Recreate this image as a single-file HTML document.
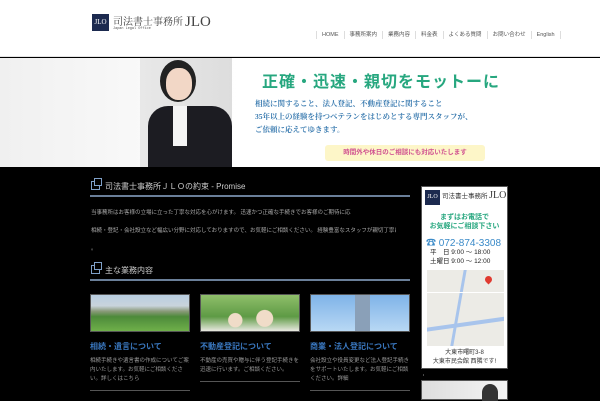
<!DOCTYPE html>
<html><head><meta charset="utf-8"><style>
*{margin:0;padding:0;box-sizing:border-box}
body{width:600px;height:400px;overflow:hidden;background:#000;font-family:"Liberation Sans","Noto Sans CJK JP",sans-serif;position:relative}
.hdr{position:absolute;left:0;top:0;width:600px;height:57px;background:#fff;border-bottom:1px solid #e4e4e4}
.logo{position:absolute;left:92px;top:14px;width:17px;height:17px;background:#1c2a4f;color:#fff;font:7px "Liberation Serif",serif;text-align:center;line-height:17px}
.lt{position:absolute;left:113px;top:13px;font:10px "Liberation Serif","Noto Serif CJK SC",serif;color:#444;white-space:nowrap}
.lt b{font-weight:normal;font-size:15px;margin-left:2px;vertical-align:-1px}
.ls{position:absolute;left:113px;top:27px;font:3.5px "Liberation Mono",monospace;color:#555}
.nav{position:absolute;left:316px;top:31px;font-size:5.5px;color:#555;display:flex}
.nav span{padding:0 5px;border-left:1px solid #ddd;line-height:8px}
.hero{position:absolute;left:0;top:58px;width:600px;height:109px;background:linear-gradient(90deg,#f0f0f0,#fff 40%,#fff)}
.woman{position:absolute;left:140px;top:58px;width:92px;height:109px;background:linear-gradient(90deg,#e8e8e8,#ddd)}
.h1{position:absolute;left:262px;top:68px;font-size:16px;font-weight:bold;color:#27a77f;letter-spacing:1px;white-space:nowrap}
.ht{position:absolute;left:255px;top:97px;font:7.5px/13px "Liberation Serif","Noto Serif CJK SC",serif;color:#3a7bb0;font-weight:bold;white-space:nowrap}
.pill{position:absolute;left:325px;top:145px;width:160px;height:16px;background:#fdf6c8;color:#d05090;font-size:6.5px;line-height:16px;text-align:center;border-radius:3px;font-weight:bold}
.sec{position:absolute;left:91px;color:#ccc;font-size:8px}
.rule{position:absolute;left:90px;width:320px;height:2px;background:#6a7f99}
.ic{display:inline-block;width:9px;height:9px;border:1px solid #7fa0c8;position:relative;vertical-align:-1px;margin-right:5px}
.ic:after{content:"";position:absolute;left:2px;top:-4px;width:6px;height:6px;border:1px solid #7fa0c8;background:#000}
.p{position:absolute;left:91px;font-size:5.5px;color:#aaa;white-space:nowrap;overflow:hidden}
.card{position:absolute;top:294px;width:100px}
.img{height:38px;border:1px solid #555}
.ct{margin-top:9px;font-size:8px;color:#3a78c0;font-weight:bold}
.cp{margin-top:5px;font-size:5.5px;line-height:9px;color:#999}
.cl{height:1px;background:#555;position:absolute;left:0;width:100px}
.side{position:absolute;left:421px;top:186px;width:87px;height:183px;background:#fff;border:1px solid #555}
</style></head><body>
<div class="hdr">
<div class="logo">JLO</div>
<div class="lt">司法書士事務所<b>JLO</b></div>
<div class="ls">Japan Legal Office</div>
<div class="nav"><span>HOME</span><span>事務所案内</span><span>業務内容</span><span>料金表</span><span>よくある質問</span><span>お問い合わせ</span><span style="border-right:1px solid #ddd">English</span></div>
</div>
<div class="hero"></div>
<div class="woman">
<div style="position:absolute;left:20px;top:2px;width:36px;height:42px;border-radius:50%;background:#222"></div>
<div style="position:absolute;left:26px;top:10px;width:26px;height:32px;border-radius:45%;background:#f2d7c6"></div>
<div style="position:absolute;left:8px;top:48px;width:84px;height:61px;border-radius:20px 20px 0 0;background:#1c1c22"></div>
<div style="position:absolute;left:33px;top:48px;width:14px;height:40px;background:#f4f4f4"></div>
</div>
<div class="h1">正確・迅速・親切をモットーに</div>
<div class="ht">相続に関すること、法人登記、不動産登記に関すること<br>35年以上の経験を持つベテランをはじめとする専門スタッフが、<br>ご依頼に応えてゆきます。</div>
<div class="pill">時間外や休日のご相談にも対応いたします</div>

<div class="sec" style="top:181px"><span class="ic"></span>司法書士事務所ＪＬＯの約束 - Promise</div>
<div class="rule" style="top:195px"></div>
<div class="p" style="top:208px;width:260px">当事務所はお客様の立場に立った丁寧な対応を心がけます。 迅速かつ正確な手続きでお客様のご期待に応えます。</div>
<div class="p" style="top:226px;width:305px">相続・登記・会社設立など幅広い分野に対応しておりますので、お気軽にご相談ください。 経験豊富なスタッフが親切丁寧にサポートいたします。ご相談お待ちしております。</div>
<div class="p" style="top:244px">。</div>
<div class="sec" style="top:265px"><span class="ic"></span>主な業務内容</div>
<div class="rule" style="top:279px"></div>

<div class="card" style="left:90px"><div class="img" style="background:linear-gradient(#b8cde0 0,#c9d4dc 30%,#8a9a7a 45%,#4d8a3a 60%,#6fb04a 100%)"></div><div class="ct">相続・遺言について</div><div class="cp">相続手続きや遺言書の作成についてご案内いたします。お気軽にご相談ください。詳しくはこちら</div></div>
<div class="card" style="left:200px"><div class="img" style="background:radial-gradient(circle at 35% 70%,#f0dcc8 0 10%,transparent 11%),radial-gradient(circle at 65% 65%,#f0dcc8 0 12%,transparent 13%),linear-gradient(#8fbf6a,#5e9a45 60%,#e8e8e0)"></div><div class="ct">不動産登記について</div><div class="cp">不動産の売買や贈与に伴う登記手続きを迅速に行います。ご相談ください。</div></div>
<div class="card" style="left:310px"><div class="img" style="background:linear-gradient(90deg,transparent 45%,#8aa0b8 45% 60%,transparent 60%),linear-gradient(#7fb3e8,#b8d8f4)"></div><div class="ct">商業・法人登記について</div><div class="cp">会社設立や役員変更など法人登記手続きをサポートいたします。お気軽にご相談ください。詳細</div></div>
<div class="cl" style="left:90px;top:390px"></div>
<div class="cl" style="left:200px;top:381px"></div>
<div class="cl" style="left:310px;top:390px"></div>

<div class="side">
<div style="position:absolute;left:3px;top:3px;width:15px;height:15px;background:#1c2a4f;color:#fff;font:6px serif;line-height:15px;text-align:center">JLO</div>
<div style="position:absolute;left:20px;top:3px;font:6.5px serif;color:#333;white-space:nowrap">司法書士事務所 <b style="font-size:10px;font-weight:normal">JLO</b></div>
<div style="position:absolute;left:0;width:85px;top:26px;text-align:center;font-size:7px;line-height:9px;color:#27a77f;font-weight:bold">まずはお電話で<br>お気軽にご相談下さい</div>
<div style="position:absolute;left:4px;top:47px;font-size:10px;color:#3a8ac8;white-space:nowrap">☎ 072-874-3308</div>
<div style="position:absolute;left:8px;top:61px;font-size:6.5px;line-height:9px;color:#222;white-space:nowrap">平　日 9:00 〜 18:00<br>土曜日 9:00 〜 12:00</div>
<div style="position:absolute;left:5px;top:83px;width:77px;height:76px;background:#ecebe6;overflow:hidden">
<div style="position:absolute;left:30px;top:0;width:3px;height:76px;background:#a8c4ec;transform:skewX(-10deg)"></div>
<div style="position:absolute;left:-5px;top:52px;width:90px;height:4px;background:#a8c4ec;transform:rotate(-8deg)"></div>
<div style="position:absolute;left:0;top:22px;width:77px;height:1px;background:#fff"></div>
<div style="position:absolute;left:58px;top:6px;width:7px;height:7px;border-radius:50% 50% 50% 0;transform:rotate(-45deg);background:#e03a30"></div>
</div>
<div style="position:absolute;left:0;width:85px;top:162px;text-align:center;font-size:6px;line-height:9px;color:#333">大東市曙町3-8<br>大東市民会館 西隣です!</div>
</div>
<div style="position:absolute;left:421px;top:372px;color:#aaa;font-size:5px">・</div>
<div style="position:absolute;left:421px;top:380px;width:87px;height:20px;background:linear-gradient(90deg,#ddd,#f4f4f4);border:1px solid #555"><div style="position:absolute;left:60px;top:3px;width:16px;height:17px;border-radius:50% 50% 0 0;background:#333"></div></div>
</body></html>
